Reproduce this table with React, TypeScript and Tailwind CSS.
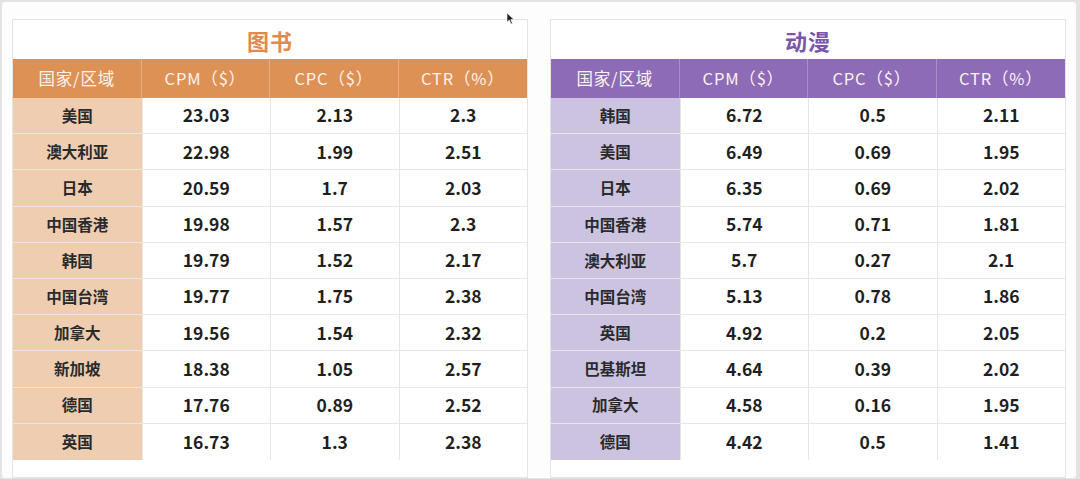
import React from "react";

type Row = [string, string, string, string];

const books: Row[] = [
  ["美国", "23.03", "2.13", "2.3"],
  ["澳大利亚", "22.98", "1.99", "2.51"],
  ["日本", "20.59", "1.7", "2.03"],
  ["中国香港", "19.98", "1.57", "2.3"],
  ["韩国", "19.79", "1.52", "2.17"],
  ["中国台湾", "19.77", "1.75", "2.38"],
  ["加拿大", "19.56", "1.54", "2.32"],
  ["新加坡", "18.38", "1.05", "2.57"],
  ["德国", "17.76", "0.89", "2.52"],
  ["英国", "16.73", "1.3", "2.38"],
];

const anime: Row[] = [
  ["韩国", "6.72", "0.5", "2.11"],
  ["美国", "6.49", "0.69", "1.95"],
  ["日本", "6.35", "0.69", "2.02"],
  ["中国香港", "5.74", "0.71", "1.81"],
  ["澳大利亚", "5.7", "0.27", "2.1"],
  ["中国台湾", "5.13", "0.78", "1.86"],
  ["英国", "4.92", "0.2", "2.05"],
  ["巴基斯坦", "4.64", "0.39", "2.02"],
  ["加拿大", "4.58", "0.16", "1.95"],
  ["德国", "4.42", "0.5", "1.41"],
];

const headers = ["国家/区域", "CPM（$）", "CPC（$）", "CTR（%）"];

function Table({
  title,
  rows,
  purple,
}: {
  title: string;
  rows: Row[];
  purple?: boolean;
}) {
  const titleColor = purple ? "text-[#7a55a9]" : "text-[#e38a4b]";
  const headBg = purple ? "bg-[#8d6bb7]" : "bg-[#de9155]";
  const firstBg = purple ? "bg-[#cbc3df]" : "bg-[#efcdb1]";
  return (
    <div className="w-[516px] border border-[#e4e4e4] bg-white">
      <div
        className={`h-[39px] pt-[2px] flex items-center justify-center text-[22px] font-bold tracking-[1px] ${titleColor}`}
      >
        {title}
      </div>
      <div className={`grid grid-cols-4 h-[39px] ${headBg}`}>
        {headers.map((h, i) => (
          <div
            key={h}
            className={`flex items-center justify-center text-[16.5px] text-[#fbf3ee] tracking-[0.8px] ${
              i < 3 ? "border-r border-[#ffffff40]" : ""
            }`}
          >
            {h}
          </div>
        ))}
      </div>
      {rows.map((r, ri) => (
        <div
          key={ri}
          className={`grid grid-cols-4 h-[36.2px] ${
            ri < rows.length - 1 ? "border-b border-[#e7e7e7]" : ""
          }`}
        >
          {r.map((c, ci) => (
            <div
              key={ci}
              className={`flex items-center justify-center ${
                ci === 0
                  ? `${firstBg} text-[15.5px] font-semibold text-[#2a2a2a]`
                  : "text-[17.5px] font-semibold text-[#1f1f1f] border-l border-[#e7e7e7]"
              }`}
            >
              {c}
            </div>
          ))}
        </div>
      ))}
    </div>
  );
}

export default function App() {
  return (
    <div
      className="relative w-[1080px] h-[479px] bg-[#e3e3e3] pl-[2px] pt-[2px] pr-[4px] pb-[1px]"
      style={{ fontFamily: '"Noto Sans CJK SC", "Noto Sans", sans-serif' }}
    >
      <div className="w-full h-full bg-[#fdfdfd] rounded-[3px] flex gap-[22px] pl-[10px] pt-[17px]">
        <Table title="图书" rows={books} />
        <Table title="动漫" rows={anime} purple />
      </div>
      <svg
        className="absolute left-[506px] top-[12px]"
        width="9"
        height="13"
        viewBox="0 0 9 13"
      >
        <path d="M1 1 L1 10 L3.3 8 L5 12 L6.4 11.4 L4.8 7.6 L8 7.5 Z" fill="#222" stroke="#fff" strokeWidth="0.6" />
      </svg>
    </div>
  );
}
